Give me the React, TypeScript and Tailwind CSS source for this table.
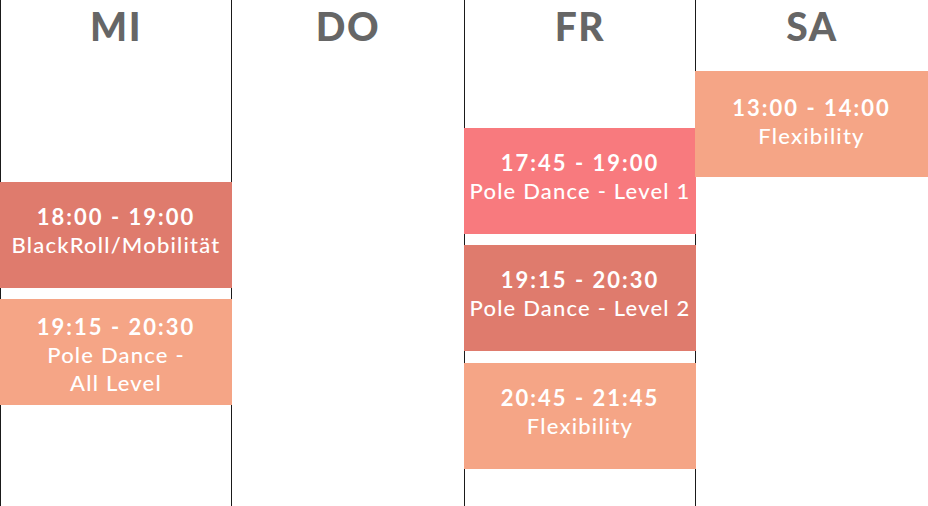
const DARK = "bg-[#df7b6d]";
const LIGHT = "bg-[#f5a586]";
const PINK = "bg-[#f87a7e]";

type Slot = { time: string; lines: string[]; color: string; gap: string; shift: string };

function Block({ slot, edge }: { slot: Slot; edge: string }) {
  return (
    <div
      className={`${slot.color} ${slot.gap} ${slot.shift} ${edge} h-[106px] flex flex-col items-center justify-center text-white text-center text-[22px] leading-[28px]`}
    >
      <div className="font-bold tracking-[2px]">{slot.time}</div>
      {slot.lines.map((l) => (
        <div key={l} className="font-medium tracking-[1.2px]">
          {l}
        </div>
      ))}
    </div>
  );
}

function Day({ name, border, edge, slots }: { name: string; border: string; edge: string; slots: Slot[] }) {
  return (
    <div className={`flex flex-col h-[506px] ${border}`}>
      <div className="h-[54px] flex items-center justify-center text-[39px] font-black tracking-[1.5px] text-[#666666] leading-none pb-[1px]">
        {name}
      </div>
      {slots.map((s) => (
        <Block key={s.time} slot={s} edge={edge} />
      ))}
    </div>
  );
}

export default function App() {
  return (
    <div className="w-[928px] h-[506px] bg-white overflow-hidden grid grid-cols-4 font-['Lato','Noto_Sans',sans-serif]">
      <Day
        name="MI"
        border="border-x border-[#1a1a1a]"
        edge="-mx-px"
        slots={[
          { time: "18:00 - 19:00", lines: ["BlackRoll/Mobilität"], color: DARK, gap: "mt-[128px]", shift: "pb-2" },
          { time: "19:15 - 20:30", lines: ["Pole Dance -", "All Level"], color: LIGHT, gap: "mt-[11px]", shift: "pt-[5px]" },
        ]}
      />
      <Day name="DO" border="" edge="" slots={[]} />
      <Day
        name="FR"
        border="border-x border-[#1a1a1a]"
        edge="-mx-px"
        slots={[
          { time: "17:45 - 19:00", lines: ["Pole Dance - Level 1"], color: PINK, gap: "mt-[74px]", shift: "pb-2" },
          { time: "19:15 - 20:30", lines: ["Pole Dance - Level 2"], color: DARK, gap: "mt-[11px]", shift: "pb-2" },
          { time: "20:45 - 21:45", lines: ["Flexibility"], color: LIGHT, gap: "mt-[12px]", shift: "pb-2" },
        ]}
      />
      <Day
        name="SA"
        border=""
        edge="-ml-px"
        slots={[{ time: "13:00 - 14:00", lines: ["Flexibility"], color: LIGHT, gap: "mt-[17px]", shift: "pb-1" }]}
      />
    </div>
  );
}
